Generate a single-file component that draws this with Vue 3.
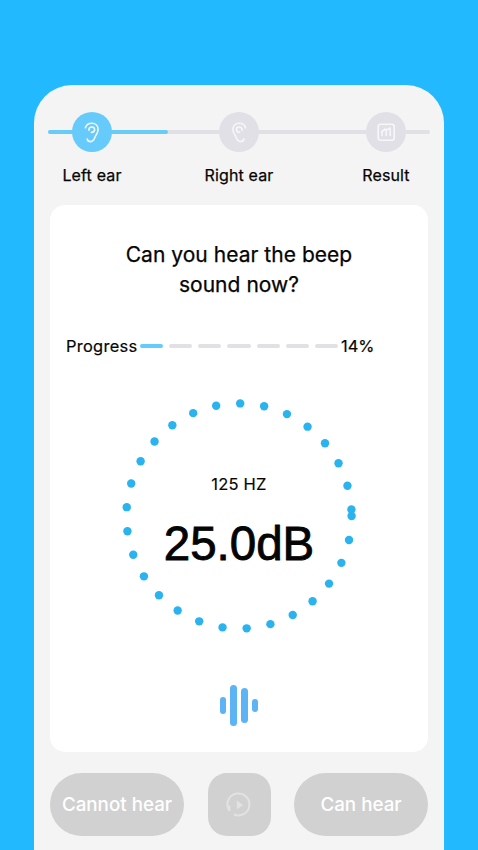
<script setup>
const segments = [true, false, false, false, false, false, false]
const dots = Array.from({ length: 30 }, (_, i) => {
  const angle = (i * 12.3 * Math.PI) / 180
  return { x: 120 + 112.6 * Math.cos(angle), y: 120 + 112.6 * Math.sin(angle) }
})
</script>

<template>
  <div class="screen">
    <main class="sheet">
      <header class="steps">
        <div class="track"><div class="track-fill"></div></div>
        <div class="step">
          <div class="bubble active">
            <svg viewBox="0 0 40 40" class="ear">
              <path d="M13.4 15.8C14.2 12.9 16.8 11.2 19.8 11.2c3.8 0 6.3 2.7 6.3 6.3 0 3.3-1.9 4.9-2.8 7-.9 2.3-1.5 5.1-4.6 5.1-2 0-3.2-1-3.5-2.6" />
              <path d="M16.9 18.2c0-2 1.1-3.2 2.9-3.2 1.7 0 2.8 1.1 2.8 2.6 0 1.8-1.3 2.8-3.2 2.8" />
            </svg>
          </div>
          <span class="label">Left ear</span>
        </div>
        <div class="step">
          <div class="bubble">
            <svg viewBox="0 0 40 40" class="ear flipped">
              <path d="M13.4 15.8C14.2 12.9 16.8 11.2 19.8 11.2c3.8 0 6.3 2.7 6.3 6.3 0 3.3-1.9 4.9-2.8 7-.9 2.3-1.5 5.1-4.6 5.1-2 0-3.2-1-3.5-2.6" />
              <path d="M16.9 18.2c0-2 1.1-3.2 2.9-3.2 1.7 0 2.8 1.1 2.8 2.6 0 1.8-1.3 2.8-3.2 2.8" />
            </svg>
          </div>
          <span class="label">Right ear</span>
        </div>
        <div class="step">
          <div class="bubble">
            <svg viewBox="0 0 40 40">
              <rect x="12.2" y="12.2" width="16" height="16" rx="2.4" />
              <path d="M16 23.5v-3.6M20.2 23.5v-5M24.2 23.5v-6.5M15.6 19.8l3.6-2.8 1.2 1.2 3.6-2.2" />
            </svg>
          </div>
          <span class="label">Result</span>
        </div>
      </header>

      <section class="card">
        <h1>Can you hear the beep<br />sound now?</h1>
        <div class="progress">
          <span class="progress-name">Progress</span>
          <div class="segments">
            <i v-for="(on, i) in segments" :key="i" :class="{ on }"></i>
          </div>
          <span class="percent">14%</span>
        </div>
        <div class="dial">
          <svg class="ring" viewBox="0 0 240 240">
            <circle v-for="(d, i) in dots" :key="i" :cx="d.x" :cy="d.y" r="4.2" />
          </svg>
          <div class="reading">
            <span class="hz">125 HZ</span>
            <span class="db">25.0dB</span>
          </div>
        </div>
        <div class="wave"><i></i><i></i><i></i><i></i></div>
      </section>

      <footer class="actions">
        <button class="pill">Cannot hear</button>
        <button class="replay" aria-label="Replay">
          <svg viewBox="0 0 28 28">
            <path d="M4.2 19.4A11 11 0 1 1 8.8 23.4M4.4 20.2V14.5" />
            <path class="solid" d="M11.8 9.6v8.8l6.4-4.4z" />
          </svg>
        </button>
        <button class="pill can">Can hear</button>
      </footer>
    </main>
  </div>
</template>

<style>
body {
  background: #22b9ff;
  overflow: hidden;
}
</style>

<style scoped>
.screen {
  box-sizing: border-box;
  height: 850px;
  padding: 85px 34px 0;
  overflow: hidden;
  background: #22b9ff;
  font-family: Inter, "Liberation Sans", sans-serif;
  color: #050505;
}
.sheet {
  box-sizing: border-box;
  height: 765px;
  padding: 27px 16px 0;
  border-radius: 38px 38px 0 0;
  background: #f4f4f4;
}
.steps {
  position: relative;
  display: flex;
  justify-content: space-between;
  height: 93px;
}
.track {
  position: absolute;
  top: 18px;
  left: -2px;
  right: -2px;
  height: 4px;
  border-radius: 2px;
  background: #e1e0e6;
}
.track-fill {
  width: 120px;
  height: 4px;
  border-radius: 2px;
  background: #69cbf8;
}
.step {
  position: relative;
  display: flex;
  flex-direction: column;
  align-items: center;
  width: 84px;
}
.bubble {
  width: 40px;
  height: 40px;
  border-radius: 50%;
  background: #e1e0e6;
}
.bubble.active {
  background: #66cbfa;
}
.bubble svg {
  display: block;
  fill: none;
  stroke: #f7f7fa;
  stroke-width: 1.6;
  stroke-linecap: round;
  stroke-linejoin: round;
}
.flipped {
  transform: scaleX(-1);
}
.label {
  margin-top: 12px;
  font-size: 16px;
  line-height: 22px;
  letter-spacing: 0.15px;
  -webkit-text-stroke: 0.25px currentColor;
  white-space: nowrap;
}
.card {
  box-sizing: border-box;
  height: 547px;
  padding-top: 35px;
  border-radius: 15px;
  background: #fff;
}
h1 {
  margin: 0;
  font-size: 21px;
  line-height: 29.5px;
  font-weight: 400;
  letter-spacing: 0.03px;
  -webkit-text-stroke: 0.25px currentColor;
  text-align: center;
}
.progress {
  display: flex;
  align-items: center;
  height: 22px;
  margin-top: 35.5px;
  padding-left: 16px;
  font-size: 16.4px;
  -webkit-text-stroke: 0.2px currentColor;
}
.progress-name {
  width: 74px;
  letter-spacing: 0.3px;
}
.segments {
  display: flex;
  gap: 6px;
  width: 198px;
}
.segments i {
  flex: 1;
  height: 4px;
  border-radius: 2px;
  background: #e1e1e5;
}
.segments .on {
  background: #66cbfa;
}
.percent {
  margin-left: 3px;
}
.dial {
  display: grid;
  width: 240px;
  height: 240px;
  margin: 39px auto 0;
}
.ring,
.reading {
  grid-area: 1 / 1;
}
.ring {
  fill: #2bb3ef;
}
.reading {
  display: flex;
  flex-direction: column;
  align-items: center;
  padding-top: 77px;
}
.hz {
  font-size: 16.5px;
  line-height: 22px;
  letter-spacing: 0.2px;
  -webkit-text-stroke: 0.15px currentColor;
}
.db {
  margin-top: 21.5px;
  font-family: "Liberation Sans", Arial, sans-serif;
  font-size: 47.5px;
  line-height: 56px;
  -webkit-text-stroke: 0.9px currentColor;
}
.wave {
  display: flex;
  align-items: center;
  justify-content: center;
  gap: 4px;
  height: 42px;
  margin-top: 48.5px;
}
.wave i {
  width: 6.6px;
  height: 17px;
  border-radius: 4px;
  background: #5cb4f4;
}
.wave i:nth-child(2) {
  height: 41px;
}
.wave i:nth-child(3) {
  height: 35px;
}
.wave i:nth-child(4) {
  height: 13px;
}
.actions {
  display: flex;
  justify-content: space-between;
  margin-top: 21px;
}
button {
  display: grid;
  place-items: center;
  padding: 0;
  border: 0;
  height: 63px;
  background: #d1d1d1;
  color: #fff;
  font: 500 18.8px/24px Inter, "Liberation Sans", sans-serif;
}
.pill {
  width: 134px;
  padding-top: 1px;
  border-radius: 32px;
}
.replay {
  width: 63px;
  border-radius: 19px;
}
.replay svg {
  width: 28px;
  height: 28px;
  fill: none;
  stroke: #e2e2e2;
  stroke-width: 2;
}
.replay .solid {
  fill: #e2e2e2;
  stroke: none;
}
</style>
